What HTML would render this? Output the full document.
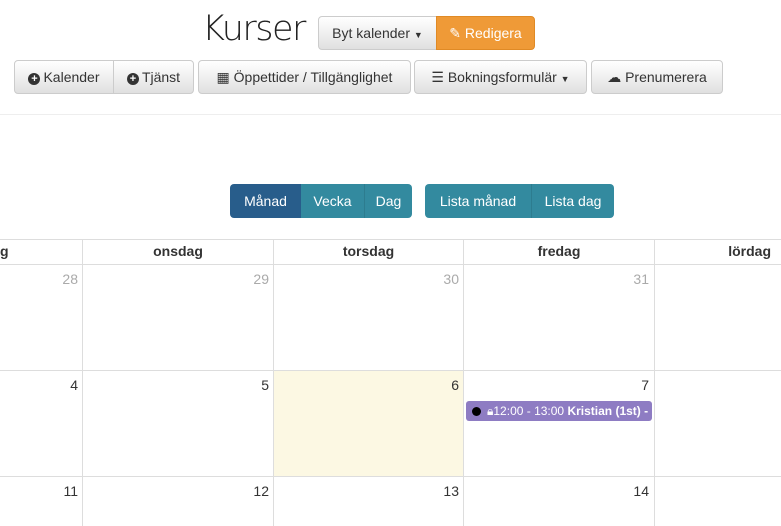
<!DOCTYPE html>
<html><head><meta charset="utf-8"><style>
*{box-sizing:border-box;margin:0;padding:0}
body{width:781px;height:526px;overflow:hidden;background:#fff;font-family:"Liberation Sans",Arial,sans-serif;color:#333;position:relative}
.abs{position:absolute}
.btn{position:absolute;height:34px;border:1px solid #ccc;background:linear-gradient(#fff,#e0e0e0);font-size:14px;line-height:32px;text-align:center;color:#333;border-radius:4px;white-space:nowrap}
.ic{display:inline-block;width:12px;height:12px;border-radius:50%;background:#333;color:#fff;font-size:11px;line-height:12px;font-weight:bold;vertical-align:-0.5px;margin-right:3px;text-align:center;position:relative;top:-1px}
.vb{position:absolute;top:184px;height:34px;color:#fff;font-size:14px;line-height:34px;text-align:center}
.hl{position:absolute;background:#ddd}
.hd{position:absolute;top:243px;font-weight:bold;font-size:14px;text-align:center}
.num{position:absolute;font-size:14px;text-align:right}
</style></head><body>
<div class="abs" style="left:202px;top:9px;font-family:'DejaVu Sans ExtraLight','DejaVu Sans',sans-serif;font-weight:200;font-size:35px;color:#222;letter-spacing:-1.5px">Kurser</div>
<div class="btn" style="left:318px;top:16px;width:119px;border-radius:4px 0 0 4px">Byt kalender <span style="font-size:9px">▼</span></div>
<div class="btn" style="left:436px;top:16px;width:99px;border-radius:0 4px 4px 0;background:#ef9a37;border-color:#e08a25;color:#fff">✎ Redigera</div>

<div class="btn" style="left:14px;top:60px;width:100px;border-radius:4px 0 0 4px"><span class="ic">+</span>Kalender</div>
<div class="btn" style="left:113px;top:60px;width:81px;border-radius:0 4px 4px 0"><span class="ic">+</span>Tjänst</div>
<div class="btn" style="left:198px;top:60px;width:213px">▦ Öppettider / Tillgänglighet</div>
<div class="btn" style="left:414px;top:60px;width:173px">☰ Bokningsformulär <span style="font-size:9px">▼</span></div>
<div class="btn" style="left:591px;top:60px;width:132px">☁ Prenumerera</div>

<div class="hl" style="left:0;top:114px;width:781px;height:1px;background:#eee"></div>

<div class="vb" style="left:230px;width:71px;background:#285d8b;border-radius:4px 0 0 4px">Månad</div>
<div class="vb" style="left:301px;width:63px;background:#338a9f">Vecka</div>
<div class="vb" style="left:364px;width:48px;background:#338a9f;border-radius:0 4px 4px 0;border-left:1px solid #2d7c8f">Dag</div>
<div class="vb" style="left:425px;width:106px;background:#338a9f;border-radius:4px 0 0 4px">Lista månad</div>
<div class="vb" style="left:531px;width:83px;background:#338a9f;border-radius:0 4px 4px 0;border-left:1px solid #2d7c8f">Lista dag</div>

<div class="abs" style="left:274px;top:371px;width:189px;height:105px;background:#fcf8e3"></div>

<div class="hl" style="left:0;top:239px;width:781px;height:1px"></div>
<div class="hl" style="left:0;top:264px;width:781px;height:1px"></div>
<div class="hl" style="left:0;top:370px;width:781px;height:1px"></div>
<div class="hl" style="left:0;top:476px;width:781px;height:1px"></div>
<div class="hl" style="left:82px;top:239px;width:1px;height:287px"></div>
<div class="hl" style="left:273px;top:239px;width:1px;height:287px"></div>
<div class="hl" style="left:463px;top:239px;width:1px;height:287px"></div>
<div class="hl" style="left:654px;top:239px;width:1px;height:287px"></div>

<div class="hd" style="left:0;width:10px;text-align:left">g</div>
<div class="hd" style="left:83px;width:190px">onsdag</div>
<div class="hd" style="left:274px;width:189px">torsdag</div>
<div class="hd" style="left:464px;width:190px">fredag</div>
<div class="hd" style="left:655px;width:126px;text-align:right;padding-right:10px">lördag</div>

<div class="num" style="left:0;width:78px;top:271px;color:#aaa">28</div>
<div class="num" style="left:83px;width:186px;top:271px;color:#aaa">29</div>
<div class="num" style="left:274px;width:185px;top:271px;color:#aaa">30</div>
<div class="num" style="left:464px;width:185px;top:271px;color:#aaa">31</div>
<div class="num" style="left:0;width:78px;top:377px">4</div>
<div class="num" style="left:83px;width:186px;top:377px">5</div>
<div class="num" style="left:274px;width:185px;top:377px">6</div>
<div class="num" style="left:464px;width:185px;top:377px">7</div>
<div class="num" style="left:0;width:78px;top:483px">11</div>
<div class="num" style="left:83px;width:186px;top:483px">12</div>
<div class="num" style="left:274px;width:185px;top:483px">13</div>
<div class="num" style="left:464px;width:185px;top:483px">14</div>

<div class="abs" style="left:466px;top:401px;width:186px;height:20px;background:#8e7cc3;border-radius:3px;color:#fff;font-size:12px;line-height:20px;white-space:nowrap;overflow:hidden;padding-left:6px"><span style="display:inline-block;width:9px;height:9px;border-radius:50%;background:#000;vertical-align:-1px;margin-right:6px"></span>🔒︎12:00 - 13:00 <b>Kristian (1st) -</b></div>
</body></html>
